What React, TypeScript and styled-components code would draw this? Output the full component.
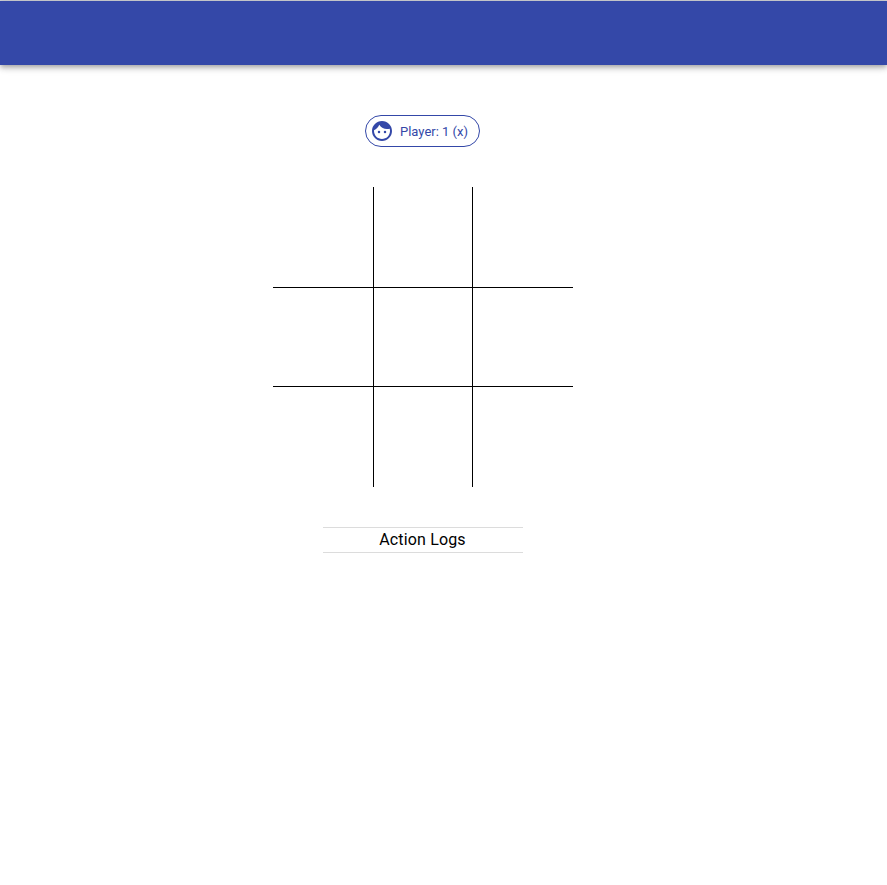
import React from "react";
import styled, { createGlobalStyle } from "styled-components";
import { MdFace } from "react-icons/md";

const GlobalStyle = createGlobalStyle`
  * { box-sizing: border-box; }
  body { margin: 0; background: #fff; font-family: Roboto, sans-serif; }
`;

const Page = styled.div`
  min-height: 885px;
  border-top: 1px solid #cfd1d6;
`;

const AppBar = styled.header`
  height: 64px;
  background: #3448a8;
  box-shadow: 0 2px 4px -1px rgba(0, 0, 0, 0.2), 0 4px 5px rgba(0, 0, 0, 0.14),
    0 1px 10px rgba(0, 0, 0, 0.12);
`;

const Game = styled.main`
  width: 300px;
  margin-left: 273px;
  padding-top: 50px;
  display: flex;
  flex-direction: column;
  align-items: center;
`;

const PlayerChip = styled.div`
  width: 115px;
  height: 32px;
  display: flex;
  align-items: center;
  margin-right: 1px;
  padding-left: 4px;
  border: 1px solid #3448a8;
  border-radius: 16px;
  color: #3448a8;
  font-size: 13px;
  white-space: nowrap;
`;

const FaceIcon = styled(MdFace)`
  width: 24px;
  height: 24px;
  margin-right: 6px;
  flex: none;
`;

const Board = styled.div`
  margin-top: 40px;
  display: grid;
  grid-template-columns: 101px 99px 100px;
  grid-template-rows: 101px 99px 100px;
`;

const Cell = styled.div<{ $right: boolean; $bottom: boolean }>`
  border-right: ${(p) => (p.$right ? "1px solid #000" : "0")};
  border-bottom: ${(p) => (p.$bottom ? "1px solid #000" : "0")};
`;

const LogTitle = styled.div`
  width: 200px;
  height: 26px;
  margin-top: 40px;
  padding-right: 1px;
  border-top: 1px solid #dcdcdc;
  border-bottom: 1px solid #dcdcdc;
  font-size: 16px;
  font-weight: 400;
  line-height: 24px;
  letter-spacing: 0.15px;
  text-align: center;
  color: #000;
`;

const cells = Array.from({ length: 9 }, (_, i) => i);

export default function App() {
  return (
    <Page>
      <GlobalStyle />
      <AppBar />
      <Game>
        <PlayerChip>
          <FaceIcon />
          <span>Player: 1 (x)</span>
        </PlayerChip>
        <Board>
          {cells.map((i) => (
            <Cell key={i} $right={i % 3 < 2} $bottom={i < 6} />
          ))}
        </Board>
        <LogTitle>Action Logs</LogTitle>
      </Game>
    </Page>
  );
}
